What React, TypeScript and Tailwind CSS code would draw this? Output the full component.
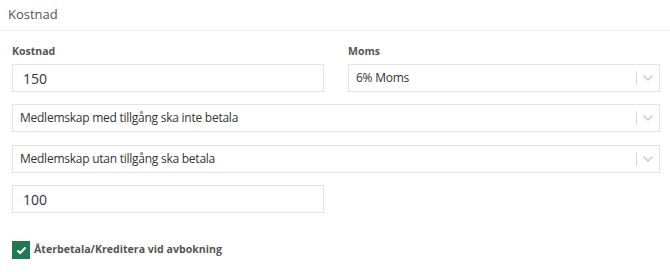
import React from "react";

function Chevron() {
  return (
    <svg width="12" height="8" viewBox="0 0 12 8" fill="none">
      <path d="M1.5 1.5 L6 6 L10.5 1.5" stroke="#c8c8c8" strokeWidth="1.4" />
    </svg>
  );
}

function Select({ value }: { value: string }) {
  return (
    <div className="h-[28px] flex items-center border border-[#e3e3e3] bg-white pl-[7px]">
      <span className="flex-1 text-[12px] tracking-[-0.25px] text-[#333]">{value}</span>
      <span className="w-px h-[14px] bg-[#d8d8d8]" />
      <span className="w-[22px] flex justify-center">
        <Chevron />
      </span>
    </div>
  );
}

function Input({ value }: { value: string }) {
  return (
    <div className="h-[28px] flex items-center border border-[#e3e3e3] bg-white pl-[10px] text-[14px] text-[#333]">
      {value}
    </div>
  );
}

export default function App() {
  return (
    <div
      className="w-[670px] h-[272px] bg-white"
      style={{ fontFamily: '"Open Sans", sans-serif' }}
    >
      <div className="h-[31px] flex items-center pl-[8px] text-[13px] text-[#555] border-b border-[#ececec]">
        Kostnad
      </div>
      <div className="pl-[12px] pr-[10px] pt-[13px]">
        <div className="grid grid-cols-2 gap-x-[24px]">
          <div>
            <div className="text-[10.5px] font-bold text-[#555] h-[14px] leading-[14px] mb-[6px]">Kostnad</div>
            <Input value="150" />
          </div>
          <div>
            <div className="text-[10.5px] font-bold text-[#555] h-[14px] leading-[14px] mb-[6px]">Moms</div>
            <Select value="6% Moms" />
          </div>
        </div>
        <div className="mt-[12px]">
          <Select value="Medlemskap med tillgång ska inte betala" />
        </div>
        <div className="mt-[13px]">
          <Select value="Medlemskap utan tillgång ska betala" />
        </div>
        <div className="mt-[12px] w-[312px]">
          <Input value="100" />
        </div>
        <div className="mt-[28px] flex items-center gap-[4px]">
          <div className="w-[18px] h-[18px] bg-[#1f7a50] flex items-center justify-center">
            <svg width="11" height="9" viewBox="0 0 11 9" fill="none">
              <path d="M1.5 4.5 L4.2 7 L9.5 1.5" stroke="white" strokeWidth="2" />
            </svg>
          </div>
          <span className="text-[10.6px] font-bold text-[#555]">Återbetala/Kreditera vid avbokning</span>
        </div>
      </div>
    </div>
  );
}
